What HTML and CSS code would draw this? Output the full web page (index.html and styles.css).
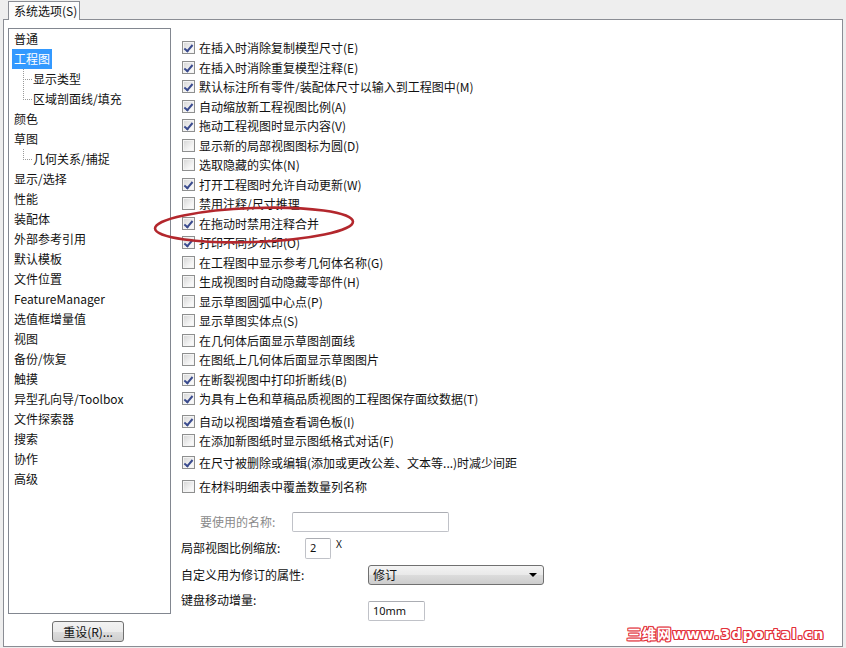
FILE: index.html
```html
<!DOCTYPE html>
<html lang="zh-CN">
<head>
<meta charset="utf-8">
<title>系统选项</title>
<link rel="stylesheet" href="styles.css">
</head>
<body>
<div class="tabs"><div class="tab">系统选项(S)</div></div>
<div class="panel">
  <div class="left">
    <ul class="tree">
      <li>普通</li>
      <li><span class="sel">工程图</span></li>
      <li class="child first">显示类型</li>
      <li class="child">区域剖面线/填充</li>
      <li>颜色</li>
      <li>草图</li>
      <li class="child first">几何关系/捕捉</li>
      <li>显示/选择</li>
      <li>性能</li>
      <li>装配体</li>
      <li>外部参考引用</li>
      <li>默认模板</li>
      <li>文件位置</li>
      <li>FeatureManager</li>
      <li>选值框增量值</li>
      <li>视图</li>
      <li>备份/恢复</li>
      <li>触摸</li>
      <li>异型孔向导/Toolbox</li>
      <li>文件探索器</li>
      <li>搜索</li>
      <li>协作</li>
      <li>高级</li>
    </ul>
    <div class="btnrow"><button class="btn">重设(R)...</button></div>
  </div>
  <div class="right">
    <div class="opts">
      <div class="row"><span class="cb on"></span>在插入时消除复制模型尺寸(E)</div>
      <div class="row"><span class="cb on"></span>在插入时消除重复模型注释(E)</div>
      <div class="row"><span class="cb on"></span>默认标注所有零件/装配体尺寸以输入到工程图中(M)</div>
      <div class="row"><span class="cb on"></span>自动缩放新工程视图比例(A)</div>
      <div class="row"><span class="cb on"></span>拖动工程视图时显示内容(V)</div>
      <div class="row"><span class="cb"></span>显示新的局部视图图标为圆(D)</div>
      <div class="row"><span class="cb"></span>选取隐藏的实体(N)</div>
      <div class="row"><span class="cb on"></span>打开工程图时允许自动更新(W)</div>
      <div class="row"><span class="cb"></span>禁用注释/尺寸推理</div>
      <div class="row"><span class="cb on"></span>在拖动时禁用注释合并</div>
      <div class="row"><span class="cb on"></span>打印不同步水印(O)</div>
      <div class="row"><span class="cb"></span>在工程图中显示参考几何体名称(G)</div>
      <div class="row"><span class="cb"></span>生成视图时自动隐藏零部件(H)</div>
      <div class="row"><span class="cb"></span>显示草图圆弧中心点(P)</div>
      <div class="row"><span class="cb"></span>显示草图实体点(S)</div>
      <div class="row"><span class="cb"></span>在几何体后面显示草图剖面线</div>
      <div class="row"><span class="cb"></span>在图纸上几何体后面显示草图图片</div>
      <div class="row"><span class="cb on"></span>在断裂视图中打印折断线(B)</div>
      <div class="row"><span class="cb on"></span>为具有上色和草稿品质视图的工程图保存面纹数据(T)</div>
      <div class="row gap3"><span class="cb on"></span>自动以视图增殖查看调色板(I)</div>
      <div class="row"><span class="cb"></span>在添加新图纸时显示图纸格式对话(F)</div>
      <div class="row gap2"><span class="cb on"></span>在尺寸被删除或编辑(添加或更改公差、文本等...)时减少间距</div>
      <div class="row gap5"><span class="cb"></span>在材料明细表中覆盖数量列名称</div>
    </div>
    <div class="form">
      <div class="frow fa"><span class="lbl la dim">要使用的名称:</span><span class="inp wide"></span></div>
      <div class="frow fb"><span class="lbl lb">局部视图比例缩放:</span><span class="inp small">2</span><span class="x">X</span></div>
      <div class="frow fc"><span class="lbl lc">自定义用为修订的属性:</span><span class="select"><span>修订</span><span class="arrow"></span></span></div>
      <div class="frow fd"><span class="lbl lc">键盘移动增量:</span><span class="inp mm">10mm</span></div>
    </div>
  </div>
</div>
<svg class="mark" width="220" height="56" viewBox="0 0 220 56"><ellipse cx="105" cy="26" rx="99" ry="17" transform="rotate(-2 105 26)" fill="none" stroke="#b3272d" stroke-width="2.6"/></svg>
<div class="wm">三维网www.3dportal.cn</div>
</body>
</html>
```
FILE: styles.css
```css
* { box-sizing: border-box; }
html, body { margin: 0; padding: 0; }
body {
  width: 846px; height: 648px; overflow: hidden; position: relative;
  background: #eeeeee;
  font-family: "Noto Sans CJK SC", "Noto Sans", sans-serif;
  font-size: 12px; color: #111;
}
.tabs { height: 19px; padding: 1px 0 0 8px; display: flex; }
.tab {
  position: relative; z-index: 2;
  height: 19px; width: 72px; padding: 0 0 0 5px;
  background: #fcfcfc; border: 1px solid #8a8d94; border-bottom: none;
  line-height: 17px; font-size: 12px;
}
.panel {
  margin-left: 3px; width: 840px; height: 628px;
  background: #fff; border: 1px solid #8a8d94;
  display: flex;
}
.left { width: 167px; padding: 8px 0 0 4px; display: flex; flex-direction: column; }
.tree {
  list-style: none; margin: 0; padding: 0;
  width: 163px; height: 586px; border: 1px solid #828790;
}
.tree li { position: relative; height: 20px; line-height: 19px; padding-left: 5px; white-space: nowrap; }
.tree li .sel { display: inline-block; margin-left: -2px; padding: 0 2px; background: #3399ff; color: #fff; height: 20px; }
.tree li.child { padding-left: 24px; }
.tree li.child::before {
  content: ""; position: absolute; left: 14px; top: -10px; width: 8px; height: 20px;
  border-left: 1px dotted #9a9a9a; border-bottom: 1px dotted #9a9a9a;
}
.tree li.child.first::before { top: 0; height: 10px; }
.btnrow { display: flex; padding-left: 44px; margin-top: 7px; }
.btn {
  width: 72px; height: 21px; padding: 0;
  font-family: inherit; font-size: 12px; color: #111; line-height: 19px;
  border: 1px solid #707070; border-radius: 3px;
  background: linear-gradient(#f2f2f2, #ebebeb 50%, #dddddd 51%, #cfcfcf);
}
.right { padding: 18px 0 0 11px; flex: 1; }
.row { height: 19.5px; display: flex; align-items: center; white-space: nowrap; }
.row.gap3 { margin-top: 3px; }
.row.gap2 { margin-top: 2px; }
.row.gap5 { margin-top: 5px; }
.cb {
  width: 13px; height: 13px; margin-right: 4px; flex: none;
  border: 1px solid #8e8f8f;
  background: linear-gradient(135deg, #d4d4d4, #f6f6f6 70%, #fbfbfb);
  box-shadow: inset 0 0 0 1px #f4f4f4;
  position: relative;
}
.cb.on::after {
  content: ""; position: absolute; left: 3px; top: 1px; width: 3px; height: 7px;
  border: solid #3a4b8e; border-width: 0 2px 2px 0; transform: rotate(40deg);
}
.form { margin-top: 15px; }
.frow { display: flex; align-items: center; white-space: nowrap; }
.lbl { line-height: 18px; margin-left: -1px; }
.dim { color: #8a8a8a; }
.la { width: 92px; margin-left: 18px; }
.lb { width: 124px; }
.lc { width: 187px; }
.inp {
  display: inline-block; height: 20px; border: 1px solid #c0c2c8; border-top-color: #abadb3;
  border-radius: 2px; background: #fff; font-size: 11px; line-height: 18px; padding-left: 4px;
  font-family: "Noto Sans", sans-serif;
}
.inp.wide { width: 157px; }
.fb { margin-top: 6px; }
.inp.small { width: 26px; height: 21px; }
.x { align-self: flex-start; font-size: 10px; margin-left: 5px; line-height: 12px; font-family: "Noto Sans", sans-serif; }
.fc { margin-top: 6px; }
.select {
  width: 176px; height: 20px; display: flex; align-items: center; justify-content: space-between;
  border: 1px solid #707070; border-radius: 3px; padding: 0 6px 0 4px;
  background: linear-gradient(#f4f4f4, #e9e9e9 50%, #dcdcdc 51%, #cdcdcd);
  line-height: 18px;
}
.arrow { width: 0; height: 0; border-left: 4px solid transparent; border-right: 4px solid transparent; border-top: 4px solid #000; }
.fd { margin-top: 6px; align-items: flex-start; }
.inp.mm { width: 57px; margin-top: 10px; }
.mark { position: absolute; left: 149px; top: 199px; }
.wm {
  position: absolute; left: 627px; top: 623px;
  font-family: "DejaVu Sans", sans-serif; font-weight: bold; font-size: 14px; letter-spacing: 1.2px;
  color: #fff;
  text-shadow: 1px 0 #e3313b, -1px 0 #e3313b, 0 1px #e3313b, 0 -1px #e3313b, 1px 1px #e3313b, -1px -1px #e3313b, 1px -1px #e3313b, -1px 1px #e3313b;
}
```
